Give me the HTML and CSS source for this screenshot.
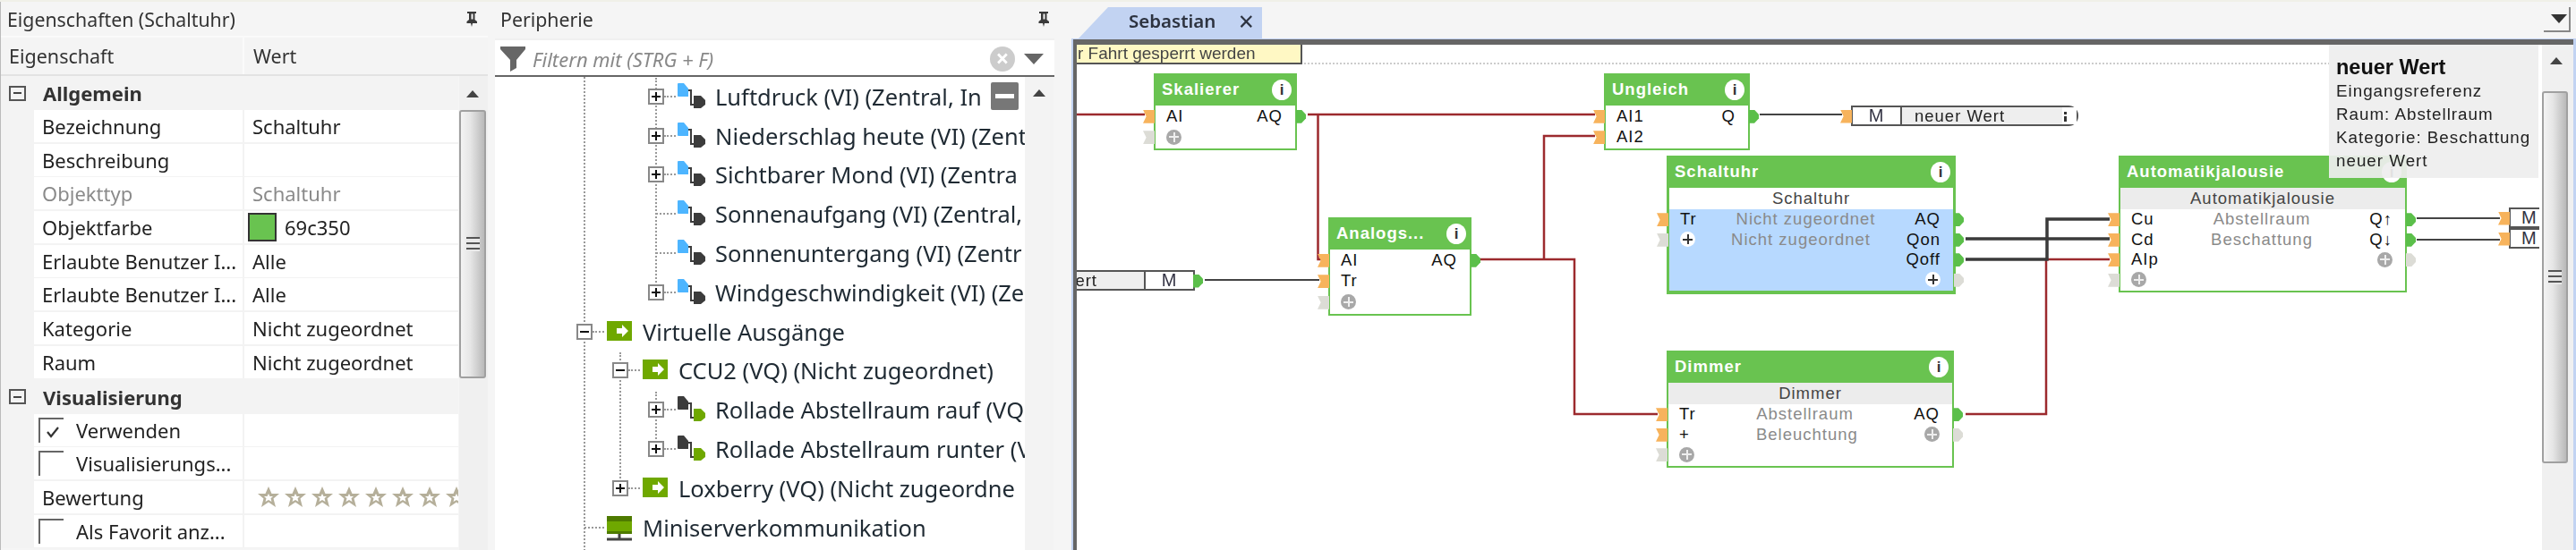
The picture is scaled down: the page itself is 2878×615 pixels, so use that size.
FILE: index.html
```html
<!DOCTYPE html>
<html lang="de">
<head>
<meta charset="utf-8">
<title>Loxone Config</title>
<link rel="stylesheet" href="styles.css">
</head>
<body>
<svg class="defs" width="0" height="0">
  <defs>
    <g id="pin"><path d="M2 0h10v2h-1.500v7l2.500 2v2H8l-1 4-1-4H1.500v-2L4 9V2H2z" fill="#3a3a3a"/><path d="M6.500 2.500h2v6h-2z" fill="#f5f5f5"/></g>
    <g id="vin"><path d="M0 1q0-1 1-1h6l5 6v9H1q-1 0-1-1z" fill="#4db5ff"/><path d="M12 8h3v16h4" fill="none" stroke="#3c3c3c" stroke-width="2"/><path d="M18 14h8l5 5v5l-5 4h-8z" fill="#3c3c3c"/></g>
    <g id="vout"><path d="M0 1q0-1 1-1h6l5 6v9H1q-1 0-1-1z" fill="#3c3c3c"/><path d="M12 8h3v16h4" fill="none" stroke="#3c3c3c" stroke-width="2"/><path d="M18 14h8l5 5v5l-5 4h-8z" fill="#6fa800"/></g>
    <g id="vq"><rect width="28" height="22" fill="#6fa800"/><path d="M11 8h6V4l7 7-7 7v-4h-6z" fill="#fff"/></g>
    <g id="star"><path d="M12 0l3.500 8H24l-6.500 5.500L20 23l-8-5.500L4 23l2.500-9.500L0 8h8.500z" fill="#b5af9a"/><path d="M12 8l1.500 3h3.500l-2.500 2.300 1 3.700L12 15l-3.500 2 1-3.700L7 11h3.500z" fill="#fff"/></g>
  </defs>
</svg>
<div class="app">

  <section class="props">
    <header class="title"><span>Eigenschaften (Schaltuhr)</span><svg class="pin" width="14" height="17" viewBox="0 0 14 17"><use href="#pin"/></svg></header>
    <div class="colhead"><span class="ch1">Eigenschaft</span><span class="ch2">Wert</span></div>
    <div class="propbody">
      <div class="grid">
        <div class="sec"><i class="secbox"></i><b>Allgemein</b></div>
        <div class="prow"><span class="pn">Bezeichnung</span><span class="pv">Schaltuhr</span></div>
        <div class="prow"><span class="pn">Beschreibung</span><span class="pv"></span></div>
        <div class="prow dis"><span class="pn">Objekttyp</span><span class="pv">Schaltuhr</span></div>
        <div class="prow"><span class="pn">Objektfarbe</span><span class="pv col"><i class="swatch"></i>69c350</span></div>
        <div class="prow"><span class="pn">Erlaubte Benutzer I...</span><span class="pv">Alle</span></div>
        <div class="prow"><span class="pn">Erlaubte Benutzer I...</span><span class="pv">Alle</span></div>
        <div class="prow"><span class="pn">Kategorie</span><span class="pv">Nicht zugeordnet</span></div>
        <div class="prow"><span class="pn">Raum</span><span class="pv">Nicht zugeordnet</span></div>
        <div class="sec"><i class="secbox"></i><b>Visualisierung</b></div>
        <div class="prow"><span class="pn chk"><i class="cb on"><svg width="16" height="14" viewBox="0 0 16 14"><path d="M2 7l4 5 8-10" fill="none" stroke="#333" stroke-width="2.200"/></svg></i>Verwenden</span><span class="pv"></span></div>
        <div class="prow"><span class="pn chk"><i class="cb"></i>Visualisierungs...</span><span class="pv"></span></div>
        <div class="prow"><span class="pn">Bewertung</span><span class="pv stars">
          <svg width="228" height="24" viewBox="0 0 228 24"><use href="#star"/><use href="#star" x="30"/><use href="#star" x="60"/><use href="#star" x="90"/><use href="#star" x="120"/><use href="#star" x="150"/><use href="#star" x="180"/><use href="#star" x="210"/></svg>
        </span></div>
        <div class="prow"><span class="pn chk"><i class="cb"></i>Als Favorit anz...</span><span class="pv"></span></div>
      </div>
      <div class="sb sb-props"><i class="up"></i><div class="thumb"><i class="grip"></i></div></div>
    </div>
  </section>

  <section class="peri">
    <header class="title"><span>Peripherie</span><svg class="pin" width="14" height="17" viewBox="0 0 14 17"><use href="#pin"/></svg></header>
    <div class="filter">
      <svg class="funnel" width="28" height="28" viewBox="0 0 28 28"><path d="M0 0h28v3L18 15v9l-7 4V15L0 3z" fill="#666"/></svg>
      <span class="ph">Filtern mit (STRG + F)</span>
      <i class="clear">×</i>
      <i class="down"></i>
    </div>
    <div class="treewrap">
      <div class="tree">
        <i class="guide g1"></i><i class="guide g2"></i><i class="guide g3"></i><i class="guide g4"></i>
        <div class="node-row deep"><i class="exp plus"></i><i class="conn"></i><svg class="ic" width="31" height="28" viewBox="0 0 31 28"><use href="#vin"/></svg><span>Luftdruck (VI) (Zentral, In</span><i class="minus"></i></div>
        <div class="node-row deep"><i class="exp plus"></i><i class="conn"></i><svg class="ic" width="31" height="28" viewBox="0 0 31 28"><use href="#vin"/></svg><span>Niederschlag heute (VI) (Zent</span></div>
        <div class="node-row deep"><i class="exp plus"></i><i class="conn"></i><svg class="ic" width="31" height="28" viewBox="0 0 31 28"><use href="#vin"/></svg><span>Sichtbarer Mond (VI) (Zentra</span></div>
        <div class="node-row deep"><i class="leaf"></i><svg class="ic" width="31" height="28" viewBox="0 0 31 28"><use href="#vin"/></svg><span>Sonnenaufgang (VI) (Zentral,</span></div>
        <div class="node-row deep"><i class="leaf"></i><svg class="ic" width="31" height="28" viewBox="0 0 31 28"><use href="#vin"/></svg><span>Sonnenuntergang (VI) (Zentr</span></div>
        <div class="node-row deep"><i class="exp plus"></i><i class="conn"></i><svg class="ic" width="31" height="28" viewBox="0 0 31 28"><use href="#vin"/></svg><span>Windgeschwindigkeit (VI) (Ze</span></div>
        <div class="node-row l1"><i class="exp"></i><i class="conn"></i><svg class="ic2" width="28" height="22" viewBox="0 0 28 22"><use href="#vq"/></svg><span>Virtuelle Ausgänge</span></div>
        <div class="node-row l2"><i class="exp"></i><i class="conn"></i><svg class="ic2" width="28" height="22" viewBox="0 0 28 22"><use href="#vq"/></svg><span>CCU2 (VQ) (Nicht zugeordnet)</span></div>
        <div class="node-row deep"><i class="exp plus"></i><i class="conn"></i><svg class="ic" width="31" height="28" viewBox="0 0 31 28"><use href="#vout"/></svg><span>Rollade Abstellraum rauf (VQ</span></div>
        <div class="node-row deep"><i class="exp plus"></i><i class="conn"></i><svg class="ic" width="31" height="28" viewBox="0 0 31 28"><use href="#vout"/></svg><span>Rollade Abstellraum runter (V</span></div>
        <div class="node-row l2"><i class="exp plus"></i><i class="conn"></i><svg class="ic2" width="28" height="22" viewBox="0 0 28 22"><use href="#vq"/></svg><span>Loxberry (VQ) (Nicht zugeordne</span></div>
        <div class="node-row l1"><i class="leaf"></i><svg class="ic2 srv" width="28" height="28" viewBox="0 0 28 28"><rect width="28" height="6" y="0" fill="#4e7a00"/><rect width="28" height="11" y="6" fill="#6fa800"/><rect width="28" height="3" y="17" fill="#4e7a00"/><path d="M14 20v5M0 26h28" stroke="#444" stroke-width="3"/></svg><span>Miniserverkommunikation</span></div>
      </div>
      <div class="sb sb-tree"><i class="up"></i></div>
    </div>
  </section>

  <section class="main">
    <div class="tabbar">
      <div class="tab"><span>Sebastian</span><i class="x">×</i></div>
      <div class="tabmenu"><i class="down dark"></i></div>
    </div>
    <div class="frame">
      <div class="canvas">
        <svg class="wires" width="1636" height="565" viewBox="1204 50 1636 565">
          <path class="dots" d="M1458 71H2603"/>
          <g class="red">
            <path d="M1204 128H1280"/><path d="M1462 128H1783"/><path d="M1473.500 128V290H1480"/>
            <path d="M1652 290H1760V463H1853"/><path d="M1726 290V152H1783"/><path d="M2197 463H2287V290H2358"/>
          </g>
          <g class="blk"><path d="M2197 267H2358"/><path d="M2197 290H2288V245H2358"/></g>
          <g class="thin"><path d="M1347 313H1475"/><path d="M1967 128H2059"/><path d="M2701 244H2794"/><path d="M2701 268H2794"/></g>
        </svg>

        <div class="note">r Fahrt gesperrt werden</div>

        <div class="block b-skal s">
          <div class="bh"><span>Skalierer</span><i class="info">i</i></div>
          <div class="bb">
            <div class="pr"><i class="pi"></i><span>AI</span><span>AQ</span><i class="po"></i></div>
            <div class="pr"><i class="pi gr"></i><i class="add"></i></div>
          </div>
        </div>
        <div class="block b-ana s">
          <div class="bh"><span>Analogs...</span><i class="info">i</i></div>
          <div class="bb">
            <div class="pr"><i class="pi"></i><span>AI</span><span>AQ</span><i class="po"></i></div>
            <div class="pr"><i class="pi"></i><span>Tr</span></div>
            <div class="pr"><i class="pi gr"></i><i class="add"></i></div>
          </div>
        </div>
        <div class="block b-ung s">
          <div class="bh"><span>Ungleich</span><i class="info">i</i></div>
          <div class="bb">
            <div class="pr"><i class="pi"></i><span>AI1</span><span>Q</span><i class="po"></i></div>
            <div class="pr"><i class="pi"></i><span>AI2</span></div>
          </div>
        </div>
        <div class="block b-sch w sel">
          <div class="bh"><span>Schaltuhr</span><i class="info">i</i></div>
          <div class="bs plain">Schaltuhr</div>
          <div class="bb">
            <div class="pr"><i class="pi"></i><span>Tr</span><span class="lab">Nicht zugeordnet</span><span>AQ</span><i class="po"></i></div>
            <div class="pr"><i class="pi gr"></i><i class="add wh"></i><span class="lab">Nicht zugeordnet</span><span>Qon</span><i class="po"></i></div>
            <div class="pr end"><span>Qoff</span><i class="po"></i></div>
            <div class="pr end"><i class="add wh"></i><i class="po gr"></i></div>
          </div>
        </div>
        <div class="block b-dim w">
          <div class="bh"><span>Dimmer</span><i class="info">i</i></div>
          <div class="bs">Dimmer</div>
          <div class="bb">
            <div class="pr"><i class="pi"></i><span>Tr</span><span class="lab">Abstellraum</span><span>AQ</span><i class="po"></i></div>
            <div class="pr"><i class="pi"></i><span>+</span><span class="lab">Beleuchtung</span><i class="add"></i><i class="po gr"></i></div>
            <div class="pr"><i class="pi gr"></i><i class="add"></i></div>
          </div>
        </div>
        <div class="block b-aut w">
          <div class="bh"><span>Automatikjalousie</span><i class="info">i</i></div>
          <div class="bs">Automatikjalousie</div>
          <div class="bb">
            <div class="pr"><i class="pi"></i><span>Cu</span><span class="lab">Abstellraum</span><span>Q↑</span><i class="po"></i></div>
            <div class="pr"><i class="pi"></i><span>Cd</span><span class="lab">Beschattung</span><span>Q↓</span><i class="po"></i></div>
            <div class="pr"><i class="pi"></i><span>AIp</span><i class="add"></i><i class="po gr"></i></div>
            <div class="pr"><i class="pi gr"></i><i class="add"></i></div>
          </div>
        </div>

        <div class="mem m-left"><span class="mn">neuer Wert</span><span class="mm">M</span><i class="po"></i></div>
        <div class="mem m-top"><i class="pi"></i><span class="mm">M</span><span class="mn grow">neuer Wert</span><i class="mdots"></i></div>
        <div class="mem m-r1"><i class="pi"></i><span class="mm">M</span></div>
        <div class="mem m-r2"><i class="pi"></i><span class="mm">M</span></div>

        <div class="tip">
          <strong>neuer Wert</strong>
          <span>Eingangsreferenz</span>
          <span>Raum: Abstellraum</span>
          <span>Kategorie: Beschattung</span>
          <span>neuer Wert</span>
        </div>
      </div>
      <div class="sb sb-main"><i class="up"></i><div class="thumb"><i class="grip"></i></div></div>
    </div>
  </section>
</div>
</body>
</html>
```
FILE: styles.css
```css
* { box-sizing: border-box; }
html, body { margin: 0; padding: 0; }
body {
  width: 2878px; height: 615px; overflow: hidden; background: #f5f5f5;
  font-family: "Noto Sans", "Open Sans", sans-serif; color: #222;
}
i { display: block; font-style: normal; }
.defs { position: absolute; }
.app { display: flex; width: 2878px; height: 615px; filter: blur(.55px); border-top: 2px solid #f0f0e8; }

/* docked panels */
.title { height: 38px; display: flex; align-items: center; justify-content: space-between; font-size: 21.300px; color: #333; }
.props { width: 545px; border-left: 1px solid #bbb; margin-right: 8px; }
.props .title { padding: 0 11px 0 7px; }
.colhead { height: 45px; display: flex; background: #f4f4f4; border-top: 2px solid #fafafa; border-bottom: 2px solid #e2e2e2; font-size: 21.500px; color: #333; align-items: center; }
.ch1 { width: 272px; padding-left: 9px; height: 100%; display: flex; align-items: center; border-right: 2px solid #fafafa; }
.ch2 { padding-left: 10px; }
.propbody { display: flex; }
.grid { width: 511px; }
.sec { height: 38px; display: flex; align-items: center; gap: 19px; background: #f3f3f3; padding-left: 9px; font-size: 22px; color: #333; }
.secbox { width: 19px; height: 17px; border: 2px solid #555; position: relative; }
.secbox::after { content: ""; position: absolute; left: 3px; right: 3px; top: 5.500px; height: 2px; background: #444; }
.prow { height: 37.700px; display: flex; background: #f3f3f3; padding-left: 37px; font-size: 22px; }
.pn, .pv { background: #fff; display: flex; align-items: center; height: 36px; white-space: nowrap; overflow: hidden; }
.pn { width: 233px; padding-left: 9px; margin-right: 2px; }
.pv { flex: 1; padding-left: 9px; }
.dis { color: #8a8a8a; }
.pv.col { padding-left: 4px; gap: 9px; }
.swatch { width: 32px; height: 32px; background: #69c350; border: 2px solid #333; flex: none; }
.chk { padding-left: 5px; gap: 14px; }
.cb { width: 28px; height: 28px; border-top: 2px solid #666; border-left: 2px solid #666; padding: 7px 0 0 6px; flex: none; }
.cb svg { display: block; }
.stars { padding-left: 15px; }
.stars svg { flex: none; }

/* scrollbars */
.sb { background: #f0f0f0; display: flex; flex-direction: column; align-items: flex-start; }
.up { width: 0; height: 0; border: 7px solid transparent; border-top: 0; border-bottom: 8px solid #444; flex: none; }
.thumb { background: linear-gradient(90deg, #f3f3f3, #e6e6e6 40%, #b9b9b9); border: 2px solid #a0a0a0; border-radius: 3px; display: flex; align-items: center; justify-content: center; }
.grip { width: 15px; height: 16px; background: repeating-linear-gradient(180deg, #555 0 2px, #e8e8e8 2px 6px); }
.sb-props { width: 32px; height: 530px; margin-left: 1px; padding-left: 0; }
.sb-props .up { margin: 16px 0 14px 8px; }
.sb-props .thumb { width: 30px; height: 300px; }
.sb-tree { width: 32px; background: #f3f3f3; }
.sb-tree .up { margin: 14px 0 0 9px; }
.sb-main { width: 35px; flex: none; }
.sb-main .up { margin: 14px 0 30px 9px; }
.sb-main .thumb { width: 29px; height: 416px; }

/* Peripherie */
.peri { width: 625px; margin-right: 12px; }
.peri .title { padding: 0 5px 0 6px; }
.filter { height: 43px; margin-top: 3px; background: #fff; border-bottom: 2px solid #666; display: flex; align-items: center; padding: 2px 6px 0 6px; border-top: 2px solid #f0f0f0; }
.funnel { flex: none; }
.ph { font-style: italic; color: #888; font-size: 22px; margin-left: 8px; flex: 1; }
.clear { width: 28px; height: 28px; border-radius: 50%; background: #ccc; color: #fff; font-size: 26px; font-weight: 700; line-height: 27px; text-align: center; margin-right: 10px; }
.down { width: 0; height: 0; border: 11px solid transparent; border-bottom: 0; border-top: 12px solid #666; margin-right: 6px; }
.treewrap { display: flex; height: 530px; background: #f5f5f5; padding-left: 0; }
.tree { width: 592px; background: #fff; position: relative; overflow: hidden; }
.guide { position: absolute; width: 0; border-left: 2px dotted #999; }
.g1 { left: 99px; top: 0; height: 530px; }
.g2 { left: 179px; top: 1px; height: 240px; }
.g3 { left: 139px; top: 308px; height: 152px; }
.g4 { left: 179px; top: 352px; height: 64px; }
.node-row { height: 43.800px; display: flex; align-items: center; font-size: 25.500px; white-space: nowrap; position: relative; color: #1f2a33; }
.deep { padding-left: 171px; }
.l2 { padding-left: 131px; }
.l1 { padding-left: 91px; }
.exp { width: 18px; height: 18px; border: 2px solid #888; background: #fff; position: relative; flex: none; z-index: 1; }
.exp::before { content: ""; position: absolute; left: 2px; right: 2px; top: 6px; height: 2px; background: #111; }
.exp.plus::after { content: ""; position: absolute; top: 2px; bottom: 2px; left: 6px; width: 2px; background: #111; }
.conn { width: 13px; border-top: 2px dotted #999; flex: none; }
.leaf { width: 22px; margin-left: 9px; border-top: 2px dotted #999; flex: none; align-self: center; }
.ic { flex: none; margin: -2px 11px 0 2px; }
.ic2 { flex: none; margin: -2px 12px 0 3px; }
.srv { margin-top: 2px; }
.node-row span { display: block; }
.minus { position: absolute; left: 554px; top: 6px; width: 31px; height: 31px; background: #777; border-radius: 2px; }
.minus::after { content: ""; position: absolute; left: 5px; right: 5px; top: 13px; height: 5px; background: #fff; }

/* main area */
.main { flex: 1; min-width: 0; display: flex; flex-direction: column; }
.tabbar { height: 41px; display: flex; justify-content: space-between; padding: 6px 6px 0 15px; }
.tab { width: 205px; height: 35px; background: #c2d3f2; clip-path: polygon(0 100%, 33px 0, 100% 0, 100% 100%); display: flex; align-items: center; padding: 0 9px 6px 56px; justify-content: space-between; font-size: 20.500px; font-weight: 600; color: #2d3340; }
.x { font-size: 30px; font-weight: 400; line-height: 30px; margin-top: 3px; }
.tabmenu { width: 30px; height: 28px; border-right: 2px solid #888; border-bottom: 2px solid #888; display: flex; align-items: center; justify-content: center; padding-left: 6px; }
.down.dark { border-top-color: #333; border-width: 9px; border-bottom: 0; border-top-width: 10px; margin: 0; }
.frame { flex: 1; min-height: 0; margin-left: 7px; background: #fff; display: flex; border: solid; border-width: 1px 3px 0 2px; border-color: #c2d3f2; position: relative; }
.frame::before { content: ""; position: absolute; left: 0; right: 0; top: 0; height: 6px; background: #666; }
.canvas { flex: 1; min-width: 0; position: relative; overflow: hidden; margin: 6px 3px 0 0; border-left: 4px solid #666; background: #fff; width: 1636px; }
.sb-main { margin-top: 6px; }
.wires { position: absolute; left: 0; top: 0; }
.wires path { fill: none; }
.dots { stroke: #ccc; stroke-width: 2; stroke-dasharray: 2 2; }
.red path { stroke: #9c2a2e; stroke-width: 2.500; }
.blk path { stroke: #3a3a3a; stroke-width: 3.500; }
.thin path { stroke: #444; stroke-width: 2; }
.note { position: absolute; left: 0; top: 0; width: 252px; height: 22px; background: #fff8c4; border-right: 2px solid #555; border-bottom: 2px solid #555; font: 19px/20px "Liberation Sans", Arial, sans-serif; color: #444; white-space: nowrap; overflow: hidden; padding-left: 1px; }

/* function blocks */
.block { position: absolute; font: 18.500px "Liberation Sans", Arial, sans-serif; letter-spacing: 1px; color: #111; }
.s { --rh: 23.500px; }
.w { --rh: 22.500px; }
.b-skal { left: 86px; top: 32px; width: 160px; }
.b-ana { left: 281px; top: 193px; width: 160px; }
.b-ung { left: 589px; top: 32px; width: 163px; }
.b-sch { left: 659px; top: 124px; width: 323px; }
.b-dim { left: 659px; top: 342px; width: 321px; }
.b-aut { left: 1164px; top: 124px; width: 322px; }
.bh { height: 36px; background: #69c350; color: #fff; font-weight: 700; display: flex; align-items: center; justify-content: space-between; padding: 0 6px 0 9px; }
.info { width: 22px; height: 23px; border-radius: 50%; background: #fff; color: #333; font: 700 17px/23px "Liberation Sans", Arial, sans-serif; text-align: center; letter-spacing: 0; }
.bs { height: 24px; background: #ececec; text-align: center; line-height: 24px; color: #444; border: solid #69c350; border-width: 0 2px; }
.bs.plain { background: #fff; }
.bb { border: solid #69c350; border-width: 0 2px 2px; background: #fff; padding-bottom: 1px; }
.sel .bb { background: #b7d9ff; border-width: 0 3px 4px; }
.sel .bs { border-width: 0 3px; }
.pr { height: var(--rh); position: relative; display: flex; align-items: center; justify-content: space-between; padding: 0 14px 0 12px; }
.pr.end { justify-content: flex-end; }
.lab { color: #8a8a8a; }
.pi, .po { position: absolute; top: 50%; margin-top: -7px; }
.pi { left: -14px; width: 13px; height: 15px; background: #f7b35c; clip-path: polygon(0 0, 100% 0, 100% 100%, 0 100%, 28% 50%); }
.pi.gr { background: #dcdcd6; }
.po { left: 100%; margin-left: 1px; width: 11px; height: 15px; background: #5bbf4a; clip-path: polygon(0 0, 55% 0, 100% 35%, 100% 65%, 55% 100%, 0 100%); }
.po.gr { background: #dcdcd6; }
.add { width: 17px; height: 17px; border-radius: 50%; background: #a8a8a8; position: relative; }
.add::before { content: ""; position: absolute; left: 3px; right: 3px; top: 7.500px; height: 2px; background: #eee; }
.add::after { content: ""; position: absolute; top: 3px; bottom: 3px; left: 7.500px; width: 2px; background: #eee; }
.add.wh { background: #fff; }
.add.wh::before, .add.wh::after { background: #333; }

/* memory flags */
.mem { position: absolute; height: 23px; display: flex; border: 2px solid #555; background: #fff; font: 18.500px/19px "Liberation Sans", Arial, sans-serif; letter-spacing: 1px; color: #222; }
.mn { background: #eee; display: flex; align-items: center; justify-content: flex-end; overflow: hidden; white-space: nowrap; }
.mm { display: flex; align-items: center; justify-content: center; color: #334; font-size: 20px; flex: none; }
.m-left { left: 0; top: 252px; width: 132px; border-left: 0; }
.m-left .mn { width: 75px; padding-right: 52px; }
.m-left .mm { width: 55px; border-left: 2px solid #555; }
.m-top { left: 865px; top: 68px; width: 254px; border-radius: 0 11px 11px 0; }
.m-top .mm { width: 55px; border-right: 2px solid #555; }
.mn.grow { flex: 1; justify-content: flex-start; padding-left: 14px; background: linear-gradient(90deg, #eee 0 92%, #fff 92%); }
.mdots { position: absolute; right: 11px; top: 5px; width: 3px; height: 11px; background: linear-gradient(#333 0 3px, transparent 3px 5px, #333 5px); }
.m-r1 { left: 1600px; top: 182px; width: 50px; }
.m-r2 { left: 1600px; top: 205px; width: 50px; }
.m-r1 .mm, .m-r2 .mm { width: 46px; padding-left: 12px; justify-content: flex-start; }
.mem .pi { left: -14px; }
.m-left .po { margin-left: 0; }

/* tooltip */
.tip { position: absolute; left: 1399px; top: 0; width: 234px; height: 149px; background: rgba(238,238,238,.93); padding: 11px 8px; display: flex; flex-direction: column; font: 18.800px/26px "Liberation Sans", Arial, sans-serif; letter-spacing: 1px; color: #222; }
.tip strong { font-size: 23.500px; line-height: 29px; letter-spacing: 0; color: #111; margin-bottom: -1px; }
```
